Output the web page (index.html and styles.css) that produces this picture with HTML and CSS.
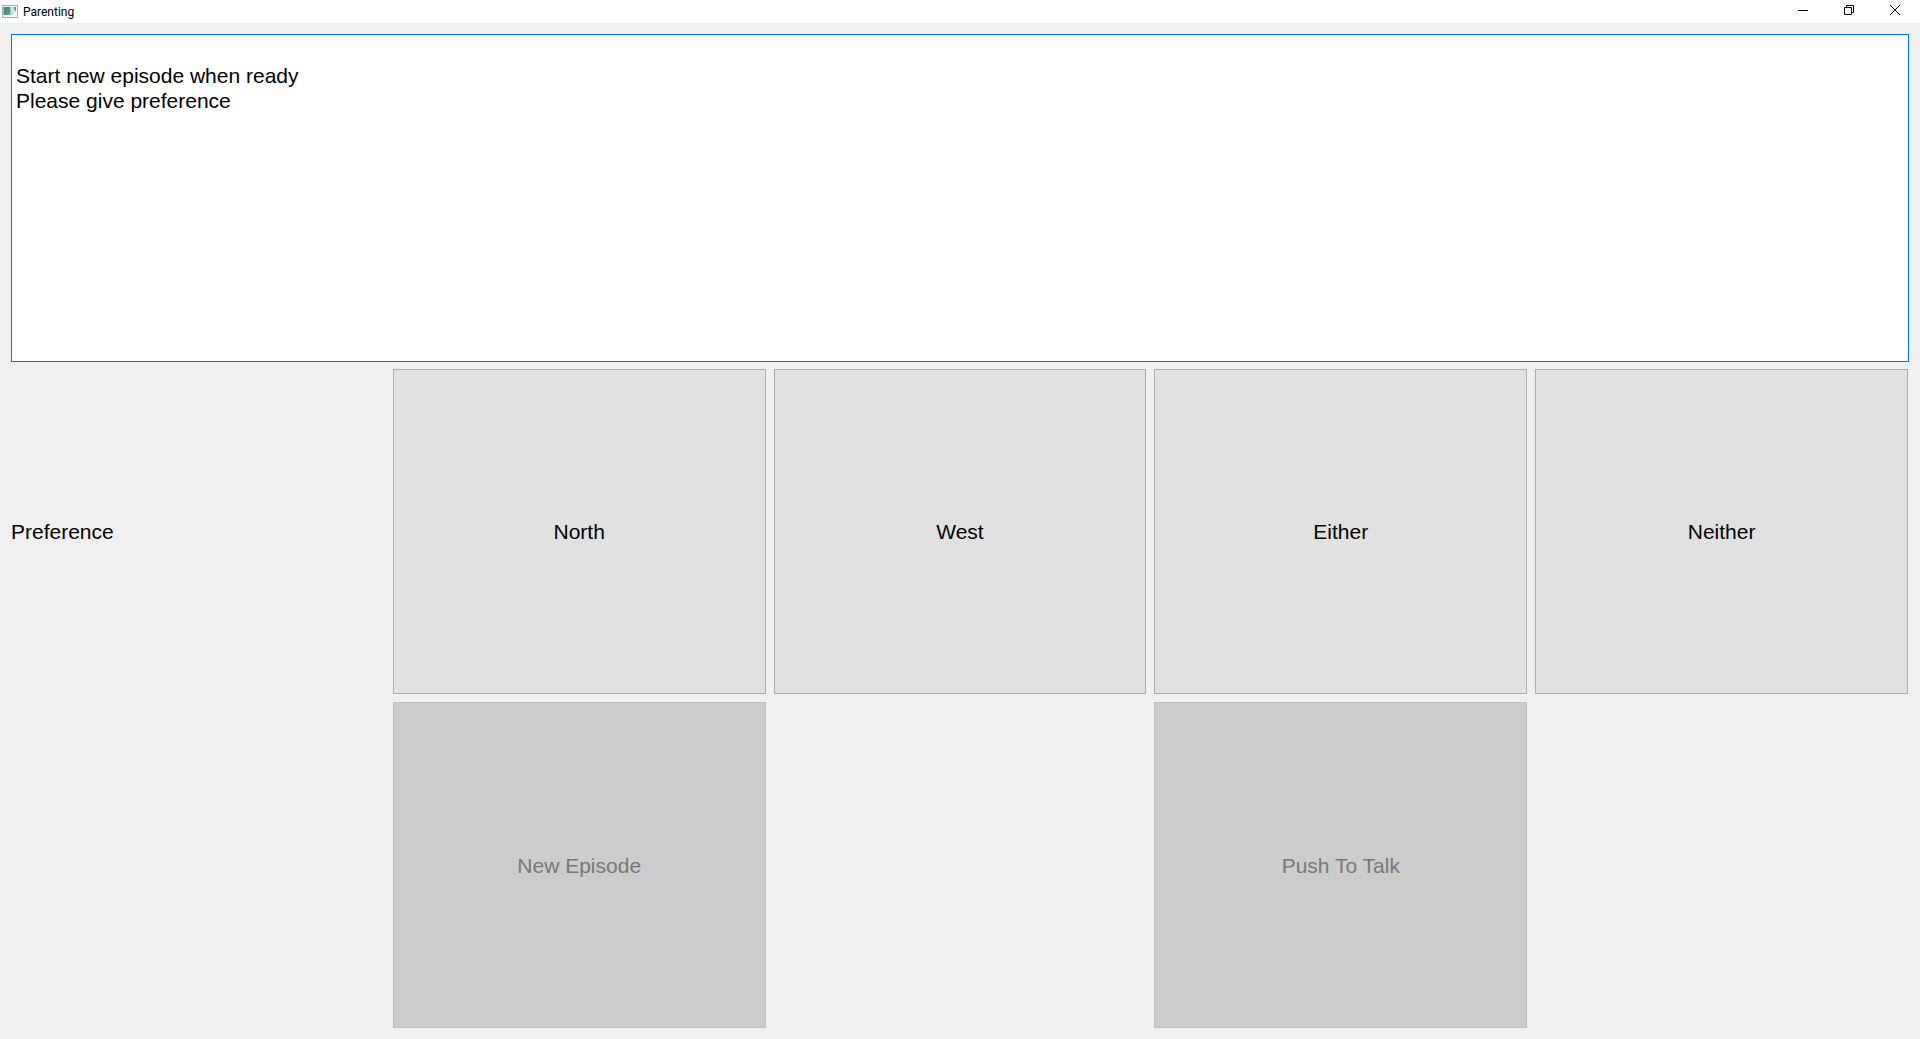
FILE: index.html
```html
<!DOCTYPE html>
<html lang="en">
<head>
<meta charset="utf-8">
<title>Parenting</title>
<link rel="stylesheet" href="styles.css">
</head>
<body>
<header class="titlebar">
  <svg class="app-icon" width="16" height="13" viewBox="0 0 16 13" aria-hidden="true">
    <defs><linearGradient id="pane" x1="0" y1="0" x2="1" y2="1"><stop offset="0" stop-color="#3f7a9b"/><stop offset="1" stop-color="#55ab6a"/></linearGradient></defs>
    <rect x=".5" y=".5" width="15" height="12" fill="#f4f6f8" stroke="#a9b0b8"/>
    <rect x="1.500" y="2" width="7" height="8" fill="url(#pane)"/>
    <rect x="9" y="2" width="3" height="8" fill="#d5dfe6"/>
    <path d="M12 2h2v5l-2-3z" fill="#5c9a94"/>
  </svg>
  <h1 class="title">Parenting</h1>
  <div class="window-controls">
    <button class="control" type="button" aria-label="Minimize"><svg width="10" height="10" viewBox="0 0 10 10"><path d="M0 5.5h10"/></svg></button>
    <button class="control" type="button" aria-label="Restore"><svg width="10" height="10" viewBox="0 0 10 10"><path d="M.5 2.5h7v7h-7zM2.500 2.500v-2h7v7h-2"/></svg></button>
    <button class="control" type="button" aria-label="Close"><svg width="10" height="10" viewBox="0 0 10 10"><path d="M0 0l10 10M10 0L0 10"/></svg></button>
  </div>
</header>
<main class="panel">
  <textarea class="log" aria-label="Messages" spellcheck="false">

Start new episode when ready
Please give preference</textarea>
  <div class="row" role="group" aria-labelledby="preference">
    <span class="label" id="preference">Preference</span>
    <button class="choice" type="button">North</button>
    <button class="choice" type="button">West</button>
    <button class="choice" type="button">Either</button>
    <button class="choice" type="button">Neither</button>
  </div>
  <div class="row">
    <button class="choice episode" type="button" disabled>New Episode</button>
    <button class="choice talk" type="button" disabled>Push To Talk</button>
  </div>
</main>
</body>
</html>
```
FILE: styles.css
```css
* { box-sizing: border-box; }

body {
  margin: 0;
  min-height: 100vh;
  display: flex;
  flex-direction: column;
  background: #f0f0f0;
  color: #000;
  font: 21px/25px "Liberation Sans", Arial, sans-serif;
}

.titlebar {
  display: flex;
  align-items: center;
  height: 23px;
  padding: 0 2px;
  background: #fff;
}

.app-icon { margin-right: 5px; }

.title {
  margin: 0;
  font: 12px/16px Roboto, "Segoe UI", sans-serif;
}

.window-controls {
  display: flex;
  height: 100%;
  margin-left: auto;
}

.control {
  display: flex;
  align-items: center;
  justify-content: center;
  width: 46px;
  padding: 0 0 3px;
  border: 0;
  background: none;
}

.control svg {
  fill: none;
  stroke: #000;
}

.panel {
  flex: 1;
  display: grid;
  grid-template-rows: repeat(3, minmax(0, 1fr));
  gap: 6px;
  padding: 11px 11px 10px;
}

.log {
  width: 100%;
  height: 100%;
  padding: 3px 4px;
  border: 1px solid #0078d7;
  outline: 0;
  resize: none;
  background: #fff;
  color: inherit;
  font: inherit;
}

.row {
  display: grid;
  grid-template-columns: repeat(5, minmax(0, 1fr));
  gap: 6px;
}

.label { align-self: center; }

.choice {
  margin: 1px;
  border: 1px solid #adadad;
  background: #e1e1e1;
  color: #000;
  font: inherit;
}

.choice:disabled {
  border-color: #bfbfbf;
  background: #ccc;
  color: #787878;
}

.episode { grid-column: 2; }
.talk { grid-column: 4; }
```
